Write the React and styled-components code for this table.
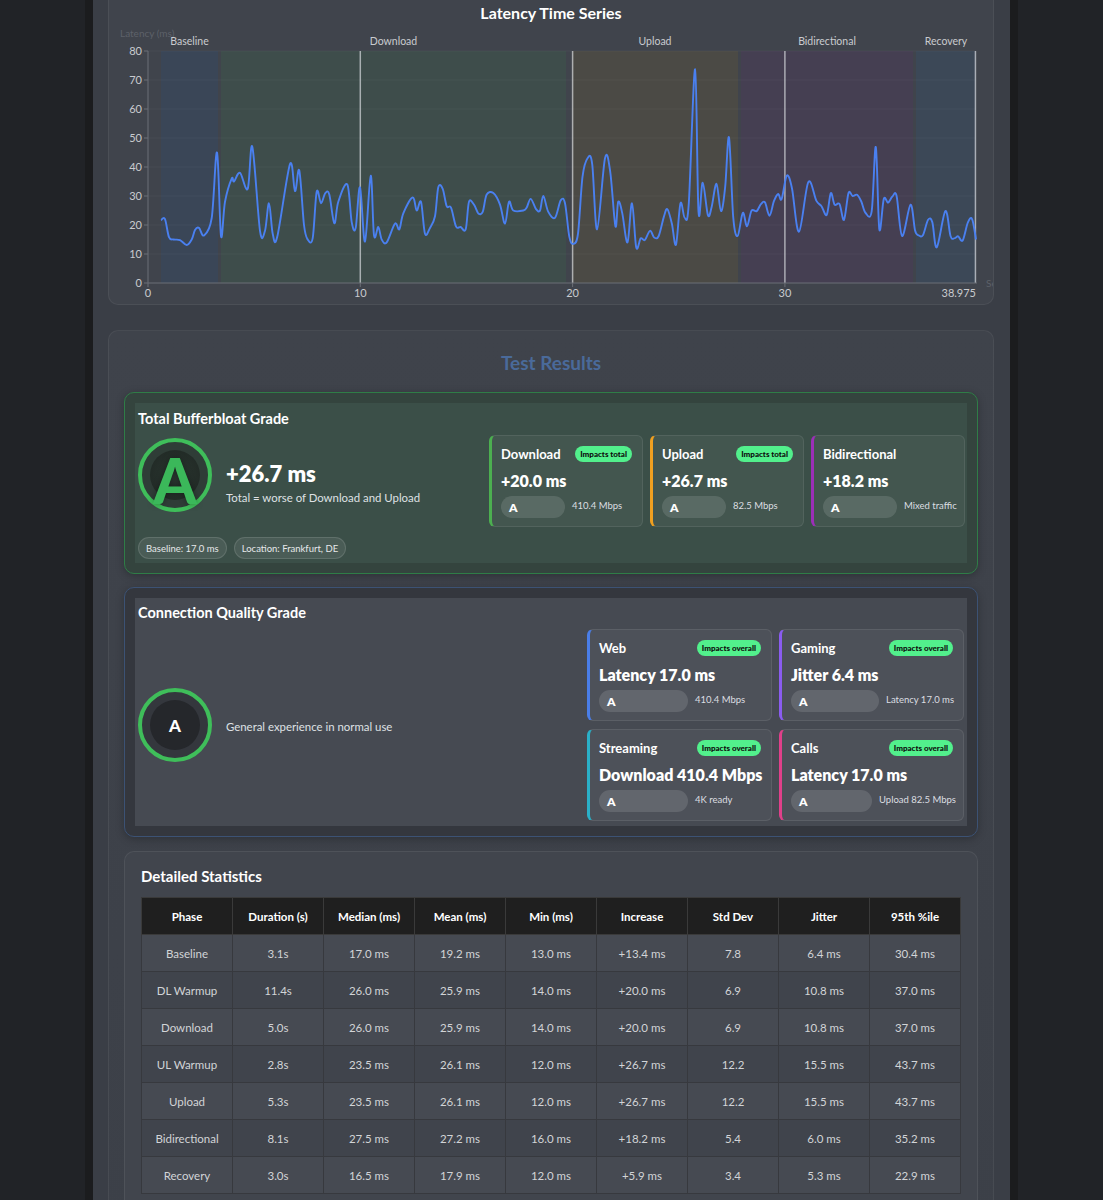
import React from 'react'
import styled, { createGlobalStyle } from 'styled-components'

// chart geometry (page pixels)
const X0 = 148
const PX = 21.23
const Y0 = 283
const PY = 2.9
const yOf = (v) => Y0 - v * PY
const xOf = (t) => X0 + t * PX

const bands = [
    { label: 'Baseline', from: 161, to: 218, color: '#3a4657' },
    { label: 'Download', from: 221, to: 566, color: '#3e4d4b' },
    { label: 'Upload', from: 572, to: 738, color: '#4b4a45' },
    { label: 'Bidirectional', from: 741, to: 913, color: '#453f52' },
    { label: 'Recovery', from: 916, to: 976, color: '#3c4857' },
]

// sampled latency: [x, ms]
const samples = [
    [161, 21.7], [165, 22], [169, 15.8], [173.3, 15], [180, 14.8], [186.7, 13.1], [191.7, 15], [195, 18.3],
    [199, 19], [204, 16.4], [211.7, 22.4], [217, 45], [221, 16.2], [225, 28], [231.7, 36], [234, 35],
    [240, 38], [247.7, 32.5], [252.3, 47], [260, 18], [265, 18], [269, 27.5], [272.7, 17], [277.3, 16],
    [290, 41], [295, 31.7], [299.3, 38.8], [304, 20], [307.7, 15], [312.7, 15.5], [316.7, 31.5], [321, 27.5],
    [325.3, 31], [329.3, 30.5], [334.3, 20.6], [338.3, 28], [347.3, 34], [351.7, 21], [355.7, 19], [360, 33],
    [365, 14.3], [370.7, 37], [374, 16.5], [378.3, 19.3], [381.7, 15], [386.7, 14], [395, 20.5], [399.3, 18.5],
    [403.3, 24], [412.7, 29.5], [416.7, 25], [421, 28], [425, 17], [430, 19], [435, 23], [438.3, 33],
    [442.7, 32.5], [446.7, 26.5], [451, 26], [456, 19.5], [460.7, 19.3], [465.7, 18.5], [469, 28], [474, 27],
    [478.3, 24], [482.7, 24.5], [486.7, 30.5], [493.3, 31], [500, 27], [505, 20.5], [509, 28], [513.3, 25],
    [523.3, 25], [526.7, 26], [530.7, 29], [536, 25.5], [540, 25], [543.3, 30], [548.3, 24.5], [555, 22.5],
    [560.7, 28.5], [565, 27.5], [569.3, 16], [573.3, 13.5], [578, 17], [582.5, 36.6], [587.7, 43.1], [592.2, 41],
    [597.1, 18.5], [605, 43], [610.2, 38.4], [615.4, 19.6], [618.2, 28], [622.3, 24], [627.5, 14], [632, 27.5],
    [636.2, 12.3], [640.7, 15.4], [644.8, 14.8], [650, 18], [654.2, 15.7], [658.7, 16.2], [663.9, 22.9], [667.4, 25.5],
    [671.9, 20.4], [676, 13.2], [680.5, 27.5], [684.7, 22.4], [688.8, 27.5], [695.1, 73.7], [698.5, 24.6], [702.7, 34.6],
    [707.9, 23.4], [711.7, 26.3], [716.5, 34.2], [721, 24.8], [725.2, 33.2], [729, 50.2], [733.2, 22.8], [737.6, 16.2],
    [742.8, 24.2], [747, 19.6], [751.5, 24.9], [756.7, 24.8], [760.9, 27.2], [765, 27.8], [769.5, 23.2], [774, 28.3],
    [778.2, 30.7], [781.6, 28.9], [786.8, 37], [792, 32.6], [799, 17.7], [808.3, 34.8], [816.3, 28.4], [821.5, 26.5],
    [826.7, 23.5], [830.8, 31], [834.6, 27], [839.5, 27.2], [844, 21.8], [848.5, 31], [852.6, 30], [857.1, 30.4],
    [861.3, 28.1], [865.4, 24.2], [871.7, 24.8], [875.8, 46.9], [879.3, 18.6], [883.8, 29], [888, 27.7], [892.4, 29.8],
    [896.6, 30], [902.1, 16.2], [910.5, 27], [915, 18.2], [918.4, 16.5], [922.9, 16.5], [928.1, 21.8], [932.3, 21],
    [936.8, 12.3], [945.4, 24.8], [950.6, 16.1], [954.8, 15.5], [958.2, 16.1], [962.7, 14.7], [967.9, 20.9], [972.1, 22],
    [976, 15],
]

const smoothPath = (pts) => {
    const p = pts.map(([x, v]) => [x, yOf(v)])
    let d = `M${p[0][0]},${p[0][1]}`
    for (let i = 0; i < p.length - 1; i++) {
        const a = p[i - 1] || p[i]
        const b = p[i]
        const c = p[i + 1]
        const e = p[i + 2] || c
        const c1 = [b[0] + (c[0] - a[0]) / 6, b[1] + (c[1] - a[1]) / 6]
        const c2 = [c[0] - (e[0] - b[0]) / 6, c[1] - (e[1] - b[1]) / 6]
        d += ` C${c1[0].toFixed(1)},${c1[1].toFixed(1)} ${c2[0].toFixed(1)},${c2[1].toFixed(1)} ${c[0]},${c[1].toFixed(1)}`
    }
    return d
}

const bufferCards = [
    { title: 'Download', value: '+20.0 ms', side: '410.4 Mbps', accent: '#4caf50', badge: 'Impacts total', pill: 64 },
    { title: 'Upload', value: '+26.7 ms', side: '82.5 Mbps', accent: '#f0a020', badge: 'Impacts total', pill: 64 },
    { title: 'Bidirectional', value: '+18.2 ms', side: 'Mixed traffic', accent: '#9c2fb8', pill: 74 },
]

const qualityCards = [
    { title: 'Web', value: 'Latency 17.0 ms', side: '410.4 Mbps', accent: '#4a7ee8', badge: 'Impacts overall', pill: 89 },
    { title: 'Gaming', value: 'Jitter 6.4 ms', side: 'Latency 17.0 ms', accent: '#8a5cf0', badge: 'Impacts overall', pill: 88 },
    { title: 'Streaming', value: 'Download 410.4 Mbps', side: '4K ready', accent: '#2ab0c8', badge: 'Impacts overall', pill: 89 },
    { title: 'Calls', value: 'Latency 17.0 ms', side: 'Upload 82.5 Mbps', accent: '#e0408a', badge: 'Impacts overall', pill: 81 },
]

const columns = ['Phase', 'Duration (s)', 'Median (ms)', 'Mean (ms)', 'Min (ms)', 'Increase', 'Std Dev', 'Jitter', '95th %ile']
const rows = [
    ['Baseline', '3.1s', '17.0 ms', '19.2 ms', '13.0 ms', '+13.4 ms', '7.8', '6.4 ms', '30.4 ms'],
    ['DL Warmup', '11.4s', '26.0 ms', '25.9 ms', '14.0 ms', '+20.0 ms', '6.9', '10.8 ms', '37.0 ms'],
    ['Download', '5.0s', '26.0 ms', '25.9 ms', '14.0 ms', '+20.0 ms', '6.9', '10.8 ms', '37.0 ms'],
    ['UL Warmup', '2.8s', '23.5 ms', '26.1 ms', '12.0 ms', '+26.7 ms', '12.2', '15.5 ms', '43.7 ms'],
    ['Upload', '5.3s', '23.5 ms', '26.1 ms', '12.0 ms', '+26.7 ms', '12.2', '15.5 ms', '43.7 ms'],
    ['Bidirectional', '8.1s', '27.5 ms', '27.2 ms', '16.0 ms', '+18.2 ms', '5.4', '6.0 ms', '35.2 ms'],
    ['Recovery', '3.0s', '16.5 ms', '17.9 ms', '12.0 ms', '+5.9 ms', '3.4', '5.3 ms', '22.9 ms'],
]

const LatencyChart = () => (
    <ChartSvg width="884" height="278" viewBox="109 26 884 278">
        {bands.map((b) => (
            <rect key={b.label} x={b.from} y={51} width={b.to - b.from} height={232} fill={b.color} />
        ))}
        {[10, 20, 30, 40, 50, 60, 70, 80].map((v) => (
            <line key={v} x1={X0} x2={976} y1={yOf(v)} y2={yOf(v)} stroke="rgba(255,255,255,0.04)" />
        ))}
        {[10, 20, 30, 38.975].map((t) => (
            <line key={t} x1={xOf(t)} x2={xOf(t)} y1={51} y2={Y0} stroke="rgba(215,218,222,0.7)" strokeWidth="1.5" />
        ))}
        <line x1={X0} x2={X0} y1={51} y2={Y0} stroke="#6b6f76" />
        <line x1={X0} x2={977} y1={Y0} y2={Y0} stroke="#6b6f76" />
        {[0, 10, 20, 30, 40, 50, 60, 70, 80].map((v) => (
            <g key={v}>
                <line x1={X0 - 4} x2={X0} y1={yOf(v)} y2={yOf(v)} stroke="#6b6f76" />
                <AxisText x={X0 - 6} y={yOf(v) + 3.5} textAnchor="end">{v}</AxisText>
            </g>
        ))}
        {[0, 10, 20, 30].map((t) => (
            <g key={t}>
                <line x1={xOf(t)} x2={xOf(t)} y1={Y0} y2={Y0 + 4} stroke="#6b6f76" />
                <AxisText x={xOf(t)} y={Y0 + 14} textAnchor="middle">{t}</AxisText>
            </g>
        ))}
        <AxisText x={976} y={Y0 + 14} textAnchor="end">38.975</AxisText>
        <DimText x={120} y={37}>Latency (ms)</DimText>
        <DimText x={986} y={287}>Seconds</DimText>
        {bands.map((b) => (
            <PhaseText key={b.label} x={(b.from + b.to) / 2} y={45} textAnchor="middle">{b.label}</PhaseText>
        ))}
        <path d={smoothPath(samples)} fill="none" stroke="#4a80f0" strokeWidth="1.9" strokeLinejoin="round" />
    </ChartSvg>
)

const SubCard = ({ card }) => (
    <Sub $accent={card.accent}>
        <SubHead>
            <SubTitle>{card.title}</SubTitle>
            {card.badge && <Badge>{card.badge}</Badge>}
        </SubHead>
        <SubValue>{card.value}</SubValue>
        <PillRow>
            <GradePill $w={card.pill}>A</GradePill>
            <Side>{card.side}</Side>
        </PillRow>
    </Sub>
)

const App = () => {
    return (
        <>
            <GlobalStyle />
            <Page>
                <ChartCard>
                    <ChartTitle>Latency Time Series</ChartTitle>
                    <LatencyChart />
                </ChartCard>

                <ResultsCard>
                    <SectionTitle>Test Results</SectionTitle>

                    <GradeCard $tone="green">
                        <GradeInner $tone="green">
                            <GradeTitle>Total Bufferbloat Grade</GradeTitle>
                            <GradeRow>
                                <Summary>
                                    <Ring $tone="green">
                                        <Core $tone="green">
                                            <BigLetter>A</BigLetter>
                                        </Core>
                                    </Ring>
                                    <SummaryText>
                                        <BigValue>+26.7 ms</BigValue>
                                        <Caption>Total = worse of Download and Upload</Caption>
                                    </SummaryText>
                                </Summary>
                                <SubGrid $cols={3} $w={154}>
                                    {bufferCards.map((c) => <SubCard key={c.title} card={c} />)}
                                </SubGrid>
                            </GradeRow>
                            <Tags>
                                <Tag>Baseline: 17.0 ms</Tag>
                                <Tag>Location: Frankfurt, DE</Tag>
                            </Tags>
                        </GradeInner>
                    </GradeCard>

                    <GradeCard $tone="blue">
                        <GradeInner $tone="blue">
                            <GradeTitle>Connection Quality Grade</GradeTitle>
                            <GradeRow $center>
                                <Summary $center>
                                    <Ring $tone="blue">
                                        <Core $tone="blue">
                                            <SmallLetter>A</SmallLetter>
                                        </Core>
                                    </Ring>
                                    <Caption>General experience in normal use</Caption>
                                </Summary>
                                <SubGrid $cols={2} $w={185}>
                                    {qualityCards.map((c) => <SubCard key={c.title} card={c} />)}
                                </SubGrid>
                            </GradeRow>
                        </GradeInner>
                    </GradeCard>

                    <StatsCard>
                        <StatsTitle>Detailed Statistics</StatsTitle>
                        <Table>
                            <thead>
                                <tr>{columns.map((c) => <th key={c}>{c}</th>)}</tr>
                            </thead>
                            <tbody>
                                {rows.map((r) => (
                                    <tr key={r[0]}>{r.map((v, i) => <td key={i}>{v}</td>)}</tr>
                                ))}
                            </tbody>
                        </Table>
                    </StatsCard>
                </ResultsCard>
            </Page>
        </>
    )
}

export default App

const GlobalStyle = createGlobalStyle`
    * { box-sizing: border-box; }
    body {
        margin: 0;
        background: #212327;
        font-family: Lato, "Open Sans", sans-serif;
        color: #fff;
        overflow: hidden;
    }
`

const Page = styled.div`
    width: 933px;
    margin: 0 auto;
    min-height: 1400px;
    background: #3a3e46;
    border-left: 8px solid #1b1c1e;
    border-right: 8px solid #1b1c1e;
    padding: 0 16px 40px 15px;
`

const ChartCard = styled.div`
    margin-top: -10px;
    background: #40444c;
    border: 1px solid rgba(255, 255, 255, 0.06);
    border-radius: 10px;
    padding-top: 11px;
    overflow: hidden;
`

const ChartTitle = styled.h2`
    margin: 0 0 2px;
    text-align: center;
    font-size: 16px;
    line-height: 22px;
    font-weight: 700;
`

const ChartSvg = styled.svg`
    display: block;
`

const AxisText = styled.text`
    font-size: 11px;
    fill: #c9cbcf;
    font-family: Lato, sans-serif;
`

const DimText = styled.text`
    font-size: 10px;
    fill: #5d6169;
    font-family: Lato, sans-serif;
`

const PhaseText = styled.text`
    font-size: 10.5px;
    fill: #c9cbcf;
    font-family: Lato, sans-serif;
`

const ResultsCard = styled.section`
    margin-top: 25px;
    background: linear-gradient(180deg, #3f434b 0%, #3c4048 100%);
    border: 1px solid rgba(255, 255, 255, 0.06);
    border-radius: 10px;
    padding: 20px 15px 40px;
`

const SectionTitle = styled.h2`
    margin: 0 0 17px;
    text-align: center;
    color: #4a6a9a;
    font-size: 19px;
    line-height: 24px;
    font-weight: 700;
`

const GradeCard = styled.div`
    border: 1px solid ${(p) => (p.$tone === 'green' ? '#2f7d47' : '#3c5274')};
    background: ${(p) => (p.$tone === 'green' ? '#34443e' : '#34373e')};
    border-radius: 10px;
    padding: 10px;
    margin-bottom: 13px;
    box-shadow: 0 2px 8px rgba(0, 0, 0, 0.25);
`

const GradeInner = styled.div`
    background: ${(p) => (p.$tone === 'green' ? '#3b4f48' : '#464a52')};
    padding: ${(p) => (p.$tone === 'green' ? '5px 2px 4px 3px' : '4px 3px 5px 3px')};
`

const GradeTitle = styled.h3`
    margin: 0 0 5px;
    font-size: 14.5px;
    line-height: 22px;
    font-weight: 700;
`

const GradeRow = styled.div`
    display: flex;
    justify-content: space-between;
    align-items: ${(p) => (p.$center ? 'center' : 'flex-start')};
`

const Summary = styled.div`
    display: flex;
    align-items: ${(p) => (p.$center ? 'center' : 'flex-start')};
    gap: 14px;
    padding-top: ${(p) => (p.$center ? '0' : '3px')};
`

const Ring = styled.div`
    width: 74px;
    height: 74px;
    flex: none;
    border-radius: 50%;
    border: 4px solid #3fbe5a;
    background: ${(p) => (p.$tone === 'green' ? '#2f3d37' : '#34373d')};
    display: flex;
    align-items: center;
    justify-content: center;
`

const Core = styled.div`
    width: 50px;
    height: 50px;
    border-radius: 50%;
    background: ${(p) =>
        p.$tone === 'green' ? 'radial-gradient(circle, #2b3731 0%, #1f2723 100%)' : '#25272b'};
    display: flex;
    align-items: center;
    justify-content: center;
`

const BigLetter = styled.span`
    font-size: 62px;
    line-height: 1;
    font-weight: 900;
    color: #3bb85a;
    margin-top: 10px;
    text-shadow: 0 0 6px rgba(0, 0, 0, 0.35);
`

const SmallLetter = styled.span`
    font-size: 17px;
    font-weight: 900;
    color: #fff;
`

const SummaryText = styled.div`
    padding-top: 23px;
`

const BigValue = styled.div`
    font-size: 22px;
    line-height: 26px;
    font-weight: 800;
`

const Caption = styled.div`
    font-size: 11.4px;
    line-height: 16px;
    color: #dfe1e4;
    margin-top: 3px;
`

const SubGrid = styled.div`
    display: grid;
    grid-template-columns: repeat(${(p) => p.$cols}, ${(p) => p.$w}px);
    column-gap: 7px;
    row-gap: 8px;
`

const Sub = styled.div`
    background: rgba(255, 255, 255, 0.045);
    border: 1px solid rgba(255, 255, 255, 0.08);
    border-left: 3px solid ${(p) => p.$accent};
    border-radius: 6px;
    padding: 9px 10px 8px 9px;
`

const SubHead = styled.div`
    display: flex;
    justify-content: space-between;
    align-items: center;
    height: 18px;
`

const SubTitle = styled.span`
    font-size: 13px;
    font-weight: 700;
`

const Badge = styled.span`
    background: #52f08c;
    color: #0d0d0d;
    font-size: 8px;
    font-weight: 900;
    line-height: 16px;
    padding: 0 5px;
    border-radius: 8px;
    white-space: nowrap;
`

const SubValue = styled.div`
    margin-top: 8px;
    font-size: 16px;
    line-height: 20px;
    font-weight: 800;
    white-space: nowrap;
`

const PillRow = styled.div`
    display: flex;
    align-items: center;
    gap: 7px;
    margin-top: 5px;
`

const GradePill = styled.div`
    width: ${(p) => p.$w}px;
    height: 22px;
    flex: none;
    border-radius: 11px;
    background: rgba(255, 255, 255, 0.12);
    display: flex;
    align-items: center;
    padding-left: 8px;
    font-size: 12px;
    font-weight: 800;
`

const Side = styled.span`
    font-size: 9.5px;
    color: #dcdee1;
    white-space: nowrap;
    margin-top: -3px;
`

const Tags = styled.div`
    display: flex;
    gap: 7px;
    margin-top: 10px;
`

const Tag = styled.span`
    height: 22px;
    display: inline-flex;
    align-items: center;
    padding: 0 7px;
    border-radius: 11px;
    font-size: 9.5px;
    color: #e6e8ea;
    background: rgba(255, 255, 255, 0.08);
    border: 1px solid rgba(255, 255, 255, 0.12);
`

const StatsCard = styled.div`
    margin-top: 14px;
    background: #41454d;
    border: 1px solid rgba(255, 255, 255, 0.07);
    border-radius: 10px;
    padding: 14px 16px 20px;
`

const StatsTitle = styled.h3`
    margin: 0 0 11px;
    font-size: 15px;
    line-height: 20px;
    font-weight: 700;
`

const Table = styled.table`
    width: 100%;
    border-collapse: collapse;
    table-layout: fixed;
    font-size: 11.5px;
    text-align: center;

    th, td {
        height: 37px;
        border: 1px solid #37393e;
        padding: 0 4px;
    }

    th {
        background: #1f1f1f;
        color: #fff;
        font-weight: 700;
        border-color: #3a3a3a;
    }

    td {
        color: #d2d4d7;
    }

    tbody tr:nth-child(odd) td {
        background: #464a52;
    }

    tbody tr:nth-child(even) td {
        background: #40444c;
    }
`
